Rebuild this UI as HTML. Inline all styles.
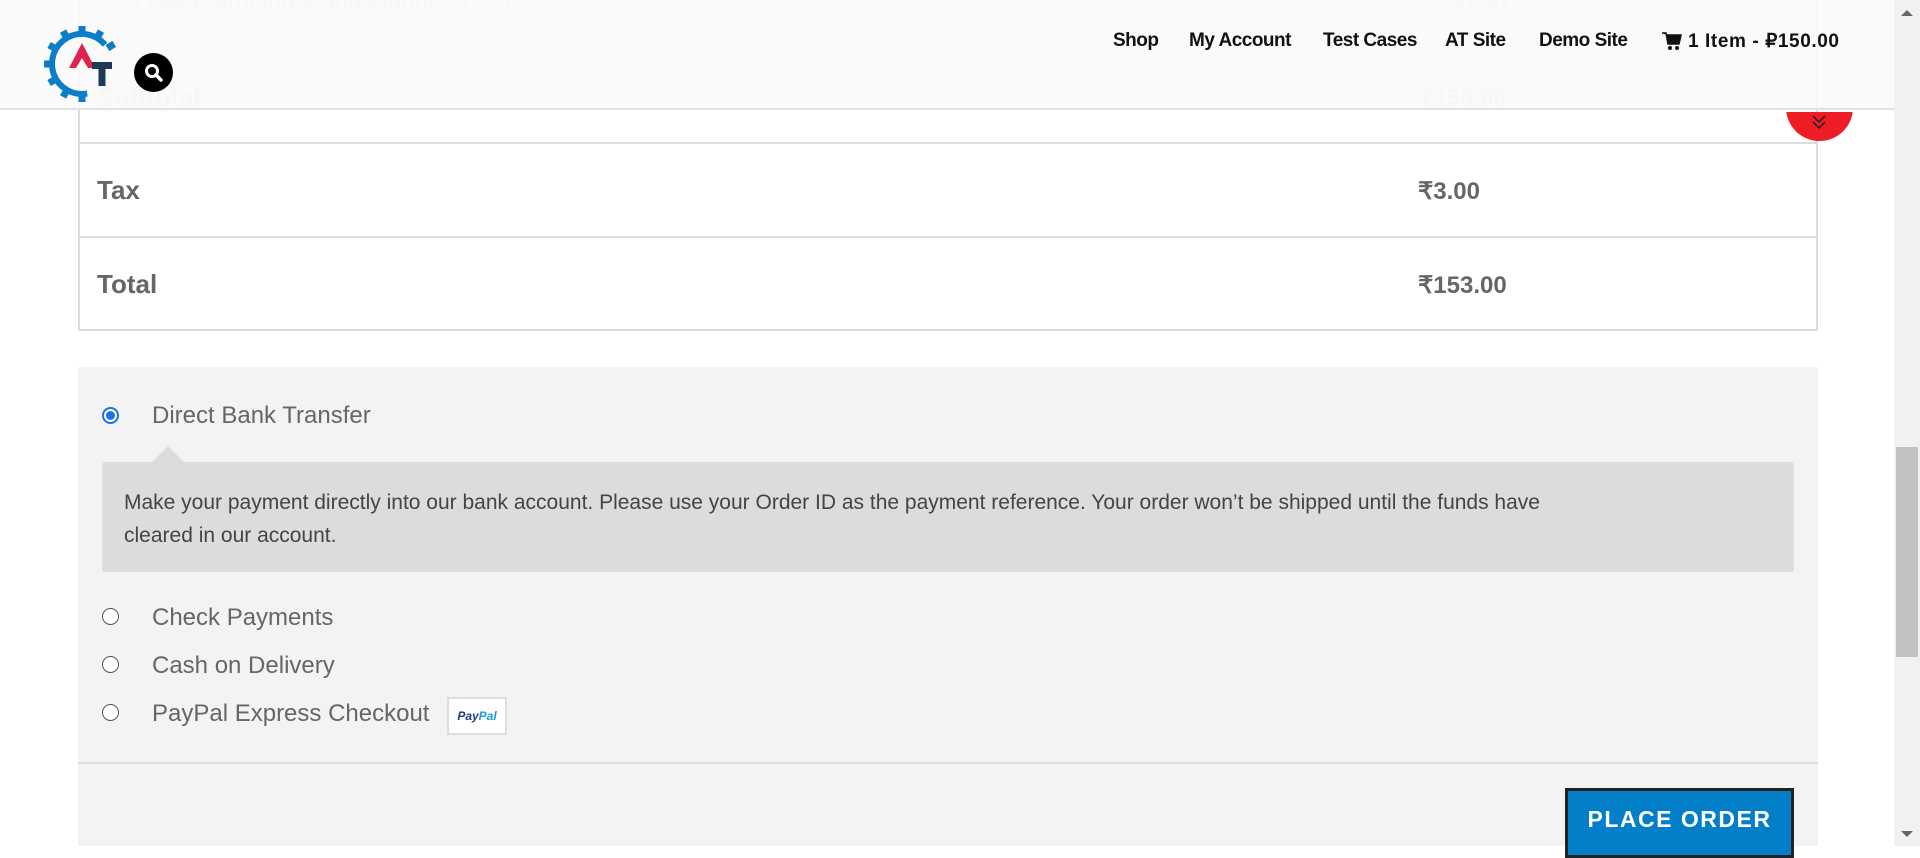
<!DOCTYPE html>
<html><head><meta charset="utf-8"><style>
*{margin:0;padding:0;box-sizing:border-box}
body{width:1920px;height:846px;overflow:hidden;background:#fff;font-family:"Liberation Sans",sans-serif;position:relative}
.abs{position:absolute}
.ghost{color:#e2e2e2;font-size:24px;font-weight:bold}
.tline{background:#ddd}
.lbl{font-size:26px;font-weight:bold;color:#666}
.amt{font-size:24px;font-weight:bold;color:#666}
.pm{font-size:24px;color:#666;left:152px}
.radio{width:17px;height:17px;border:1.5px solid #555;border-radius:50%;background:#fff;left:102px}
.nav{font-size:19px;font-weight:bold;color:#111;top:30px;letter-spacing:-0.5px}
</style></head><body>
<div class="abs" style="left:78px;top:0;width:1740px;height:331px;border-left:2px solid #ddd;border-right:2px solid #ddd"></div>
<div class="abs ghost" style="left:113px;top:-12px;font-weight:normal;font-size:24px">JS Data Structures and Algorithm &nbsp;× 1</div>
<div class="abs ghost" style="left:1418px;top:-12px;font-weight:normal">₹150.00</div>
<div class="abs ghost" style="left:97px;top:82px;font-size:26px">Subtotal</div>
<div class="abs ghost" style="left:1418px;top:84px">₹150.00</div>
<div class="abs tline" style="left:78px;top:142px;width:1740px;height:2px"></div>
<div class="abs tline" style="left:78px;top:236px;width:1740px;height:2px"></div>
<div class="abs tline" style="left:78px;top:329px;width:1740px;height:2px"></div>
<div class="abs lbl" style="left:97px;top:175px">Tax</div>
<div class="abs amt" style="left:1418px;top:177px">₹3.00</div>
<div class="abs lbl" style="left:97px;top:269px">Total</div>
<div class="abs amt" style="left:1418px;top:271px">₹153.00</div>

<div class="abs" style="left:0;top:0;width:1894px;height:110px;background:rgba(249,249,249,0.9);border-bottom:2px solid #e2e2e2"></div>
<svg class="abs" style="left:40px;top:22px" width="84" height="84" viewBox="0 0 84 84">
<path d="M47.2 71.5 A30 30 0 1 1 65 22.7" fill="none" stroke="#0a7ec7" stroke-width="6"/>
<g fill="#0a7ec7">
<rect x="38.5" y="4" width="7" height="8" transform="rotate(0 42 42)"/>
<rect x="38.5" y="4" width="7" height="8" transform="rotate(-30 42 42)"/>
<rect x="38.5" y="4" width="7" height="8" transform="rotate(-60 42 42)"/>
<rect x="38.5" y="4" width="7" height="8" transform="rotate(-90 42 42)"/>
<rect x="38.5" y="4" width="7" height="8" transform="rotate(-120 42 42)"/>
<rect x="38.5" y="4" width="7" height="8" transform="rotate(-150 42 42)"/>
<rect x="38.5" y="4" width="7" height="8" transform="rotate(180 42 42)"/>
<rect x="38.5" y="4" width="7" height="8" transform="rotate(30 42 42)"/>
<rect x="38.5" y="4" width="7" height="8" transform="rotate(58 42 42)"/>
</g>
<path d="M42 21 L29 46 L36 46 L42 36 L48 46 L55 46 Z" fill="#e0224e"/>
<path d="M52 40 H72 V47 H65.5 V64 H58.5 V47 H52 Z" fill="#1f3a56"/>
</svg>
<div class="abs" style="left:134px;top:53px;width:39px;height:39px;border-radius:50%;background:#000"></div>
<svg class="abs" style="left:142px;top:61px" width="24" height="24" viewBox="0 0 24 24"><circle cx="10" cy="10" r="5.5" fill="none" stroke="#fff" stroke-width="3"/><path d="M14 14 L19 19" stroke="#fff" stroke-width="3.5" stroke-linecap="round"/></svg>
<div class="abs nav" style="left:1113px">Shop</div>
<div class="abs nav" style="left:1189px">My Account</div>
<div class="abs nav" style="left:1323px">Test Cases</div>
<div class="abs nav" style="left:1445px">AT Site</div>
<div class="abs nav" style="left:1539px">Demo Site</div>
<svg class="abs" style="left:1662px;top:32px" width="21" height="19" viewBox="0 0 21 19"><path d="M0 1 H4 L6 12 H17 L19 3 H5" fill="#111" stroke="#111" stroke-width="1.5"/><circle cx="8" cy="16" r="2" fill="#111"/><circle cx="15" cy="16" r="2" fill="#111"/></svg>
<div class="abs nav" style="left:1688px;letter-spacing:0.6px">1 Item - ₽150.00</div>
<div class="abs" style="left:1786px;top:74px;width:67px;height:67px;border-radius:50%;background:#ee1c24;clip-path:inset(38px 0 0 0)"></div>
<svg class="abs" style="left:1810px;top:113px" width="18" height="20" viewBox="0 0 18 20"><path d="M3 3 L9 9 L15 3 M3 9 L9 15 L15 9" fill="none" stroke="#222" stroke-width="1.5"/></svg>

<div class="abs" style="left:78px;top:367px;width:1740px;height:479px;background:#f3f3f3"></div>
<div class="abs" style="left:102px;top:407px;width:17px;height:17px;border-radius:50%;border:2px solid #1a73e8;background:#fff"></div>
<div class="abs" style="left:106px;top:411px;width:9px;height:9px;border-radius:50%;background:#1a73e8"></div>
<div class="abs pm" style="top:402px">Direct Bank Transfer</div>
<div class="abs" style="left:151px;top:446px;width:0;height:0;border-left:17px solid transparent;border-right:17px solid transparent;border-bottom:17px solid #dcdcdc"></div>
<div class="abs" style="left:102px;top:462px;width:1692px;height:110px;background:#dcdcdc;border-radius:3px;padding:24px 120px 24px 22px;font-size:21px;line-height:33px;color:#444">Make your payment directly into our bank account. Please use your Order ID as the payment reference. Your order won’t be shipped until the funds have<br>cleared in our account.</div>
<div class="abs radio" style="top:608px"></div>
<div class="abs pm" style="top:604px">Check Payments</div>
<div class="abs radio" style="top:656px"></div>
<div class="abs pm" style="top:652px">Cash on Delivery</div>
<div class="abs radio" style="top:704px"></div>
<div class="abs pm" style="top:700px">PayPal Express Checkout</div>
<div class="abs" style="left:447px;top:697px;width:60px;height:38px;background:#fff;border:2px solid #ddd;font:italic bold 12px 'Liberation Sans',sans-serif;color:#253b80;text-align:center;line-height:34px">Pay<span style="color:#179bd7">Pal</span></div>
<div class="abs" style="left:78px;top:762px;width:1740px;height:2px;background:#ddd"></div>
<div class="abs" style="left:1565px;top:788px;width:229px;height:70px;background:#037ec8;border:3px solid #222;color:#fff;font-weight:bold;font-size:23px;letter-spacing:1.5px;text-align:center;padding-top:15px">PLACE ORDER</div>

<div class="abs" style="left:1894px;top:0;width:26px;height:846px;background:#f1f1f1"></div>
<div class="abs" style="left:1896px;top:447px;width:22px;height:210px;background:#c1c1c1"></div>
<div class="abs" style="left:1901px;top:10px;border-left:6px solid transparent;border-right:6px solid transparent;border-bottom:6px solid #666;width:0;height:0"></div>
<div class="abs" style="left:1901px;top:831px;border-left:6px solid transparent;border-right:6px solid transparent;border-top:6px solid #666;width:0;height:0"></div>
</body></html>
